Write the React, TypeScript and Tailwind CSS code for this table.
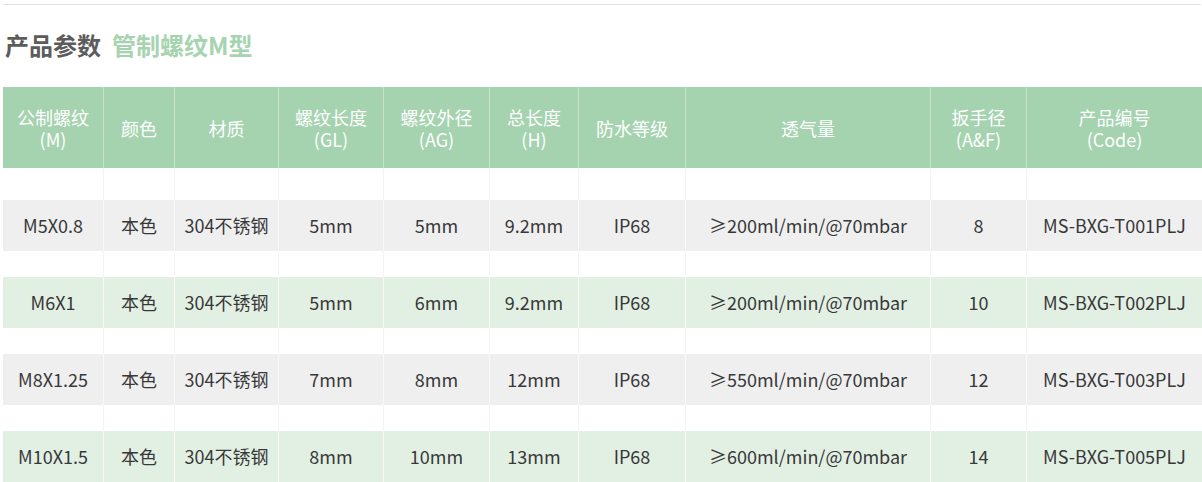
import React from 'react';

const cols = ['w-[100px]', 'w-[71px]', 'w-[104px]', 'w-[105px]', 'w-[106px]', 'w-[89px]', 'w-[107px]', 'w-[245px]', 'w-[96px]', 'w-[176px]'];

const headers: [string, string?][] = [
  ['公制螺纹', '(M)'],
  ['颜色'],
  ['材质'],
  ['螺纹长度', '(GL)'],
  ['螺纹外径', '(AG)'],
  ['总长度', '(H)'],
  ['防水等级'],
  ['透气量'],
  ['扳手径', '(A&F)'],
  ['产品编号', '(Code)'],
];

const rows = [
  ['M5X0.8', '本色', '304不锈钢', '5mm', '5mm', '9.2mm', 'IP68', '≥200ml/min/@70mbar', '8', 'MS-BXG-T001PLJ'],
  ['M6X1', '本色', '304不锈钢', '5mm', '6mm', '9.2mm', 'IP68', '≥200ml/min/@70mbar', '10', 'MS-BXG-T002PLJ'],
  ['M8X1.25', '本色', '304不锈钢', '7mm', '8mm', '12mm', 'IP68', '≥550ml/min/@70mbar', '12', 'MS-BXG-T003PLJ'],
  ['M10X1.5', '本色', '304不锈钢', '8mm', '10mm', '13mm', 'IP68', '≥600ml/min/@70mbar', '14', 'MS-BXG-T005PLJ'],
];

function Spacer({ h }: { h: string }) {
  return (
    <div className={`flex ${h}`}>
      {cols.map((w, i) => (
        <div key={i} className={`${w} shrink-0 ${i > 0 ? 'border-l border-[#f4f4f4]' : ''}`} />
      ))}
    </div>
  );
}

export default function App() {
  return (
    <div
      className="w-[1202px] h-[482px] overflow-hidden bg-white pl-[3px]"
      style={{ fontFamily: '"Noto Sans CJK SC", "Noto Sans", sans-serif' }}
    >
      <div className="mt-[4px] h-px w-[1198px] bg-[#e2e2e2]" />
      <h2 className="mt-[25px] flex items-center gap-[11px] pl-[2px] text-[24px] font-bold leading-[30px]">
        <span className="text-[#5c5c5c]">产品参数</span>
        <span className="text-[#a6d4b0]">管制螺纹M型</span>
      </h2>
      <div className="mt-[27px] text-center text-[18px]">
        <div className="flex h-[81px] bg-[#a5d3b0] text-white">
          {headers.map(([a, b], i) => (
            <div
              key={i}
              className={`${cols[i]} shrink-0 flex flex-col items-center justify-center leading-[22px] ${i > 0 ? 'border-l border-[#c6e4cd]' : ''}`}
            >
              <div>{a}</div>
              {b && <div>{b}</div>}
            </div>
          ))}
        </div>
        <div className="text-[#383838]">
          <Spacer h="h-[32px]" />
          {rows.map((r, ri) => (
            <React.Fragment key={ri}>
              {ri > 0 && <Spacer h="h-[26px]" />}
              <div className={`flex h-[51px] ${ri % 2 === 0 ? 'bg-[#efeff0]' : 'bg-[#e2f0e4]'}`}>
                {r.map((c, ci) => (
                  <div
                    key={ci}
                    className={`${cols[ci]} shrink-0 flex items-center justify-center whitespace-nowrap ${ci > 0 ? 'border-l border-[#f8f8f8]' : ''}`}
                  >
                    {c}
                  </div>
                ))}
              </div>
            </React.Fragment>
          ))}
        </div>
      </div>
    </div>
  );
}
